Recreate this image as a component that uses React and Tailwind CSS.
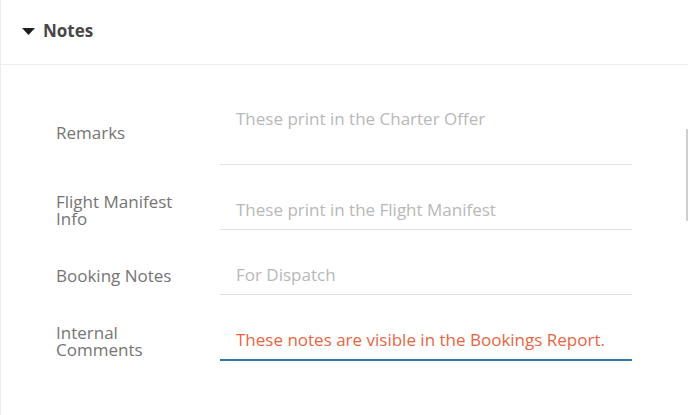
export default function App() {
  const rows = [
    { label: ["Remarks"], text: "These print in the Charter Offer", tall: true },
    { label: ["Flight Manifest", "Info"], text: "These print in the Flight Manifest" },
    { label: ["Booking Notes"], text: "For Dispatch" },
    { label: ["Internal", "Comments"], text: "These notes are visible in the Bookings Report.", active: true },
  ];

  return (
    <div className="relative w-[688px] h-[415px] bg-white overflow-hidden font-['Open_Sans',sans-serif] border-l border-[#ececec]">
      {/* header */}
      <div className="flex items-center h-[65px] pb-[2px] border-b border-[#efefef] pl-[21px]">
        <svg width="13" height="7" viewBox="0 0 13 7" className="mr-[8px]">
          <path d="M0 0 H13 L6.5 7 Z" fill="#1f1f1f" />
        </svg>
        <span className="text-[17px] font-bold text-[#474747]">Notes</span>
      </div>

      {/* fields */}
      <div className="flex flex-col gap-[25px] pt-[35px] pl-[55px]">
        {rows.map((r) => (
          <div key={r.label[0]} className="flex items-center">
            <div className="w-[164px] text-[17px] leading-[17px] text-[#757575]">
              {r.label.map((l) => (
                <div key={l}>{l}</div>
              ))}
            </div>
            <div
              className={
                r.tall
                  ? "w-[412px] h-[65px] pt-[7px] pl-[16px] border-b border-[#e2e2e2] text-[17px] leading-6 text-[#b8b8b8]"
                  : r.active
                  ? "w-[412px] h-[41px] flex items-center pl-[16px] border-b-2 border-[#3379a6] text-[17px] text-[#e8653f]"
                  : "w-[412px] h-[40px] flex items-center pl-[16px] border-b border-[#e2e2e2] text-[17px] text-[#b8b8b8]"
              }
            >
              {r.text}
            </div>
          </div>
        ))}
      </div>

      {/* scrollbar */}
      <div className="absolute right-0 top-[129px] w-[2px] h-[92px] bg-[#cfcfcf]" />
    </div>
  );
}
